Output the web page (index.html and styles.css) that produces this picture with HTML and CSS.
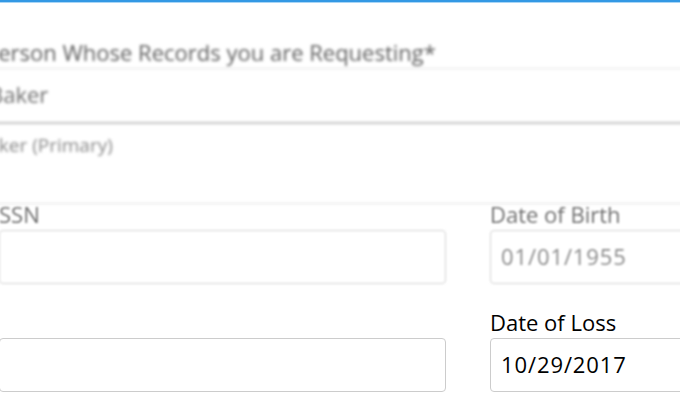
FILE: index.html
```html
<!DOCTYPE html>
<html lang="en">
<head>
    <meta charset="UTF-8">
    <meta name="viewport" content="width=device-width, initial-scale=1.0">
    <title>Records Request</title>
    <link rel="stylesheet" href="styles.css">
</head>
<body>
    <div class="topbar"></div>
    <div class="form">
        <div class="requested far">
            <div class="section-label">Person Whose Records you are Requesting*</div>
            <div class="person-field">Baker</div>
            <div class="person-options">
                <div class="person-option">Baker (Primary)</div>
            </div>
        </div>

        <div class="field-row near">
            <div class="field">
                <label for="ssn">SSN</label>
                <input type="text" id="ssn">
            </div>
            <div class="field">
                <label for="dob">Date of Birth</label>
                <input type="text" id="dob" class="muted" value="01/01/1955">
            </div>
        </div>

        <div class="field-row">
            <div class="field">
                <label for="claim">&nbsp;</label>
                <input type="text" id="claim">
            </div>
            <div class="field">
                <label for="dol">Date of Loss</label>
                <input type="text" id="dol" value="10/29/2017">
            </div>
        </div>
    </div>
</body>
</html>
```

FILE: styles.css
```css
html, body {
    margin: 0;
    overflow: hidden;
    background: #fff;
}
body {
    font-family: "Open Sans", "Liberation Sans", sans-serif;
    font-size: 22px;
    color: #000;
}
.topbar {
    height: 3px;
    background: linear-gradient(#3398e4 0, #3398e4 2px, #a8d5f6 2px);
}
.form {
    width: 980px;
    margin-left: -30px;
}
.far {
    filter: blur(1.4px);
}
.near {
    filter: blur(1px);
}
.section-label {
    margin-top: 34px;
    margin-bottom: 1px;
    padding-left: 15px;
    line-height: 30px;
    color: #5e5e5e;
}
.person-field {
    border-top: 1px solid #e2e2e2;
    border-bottom: 2px solid #c4c4c4;
    padding: 10px 0 13px 19px;
    line-height: 30px;
    color: #6e6e6e;
}
.person-options {
    border-bottom: 1px solid #dedede;
}
.person-option {
    padding: 9px 0 46px 6px;
    font-size: 19px;
    line-height: 24px;
    color: #888;
}
.field-row {
    display: grid;
    grid-template-columns: 447px 448px;
    gap: 44px;
    padding-left: 29px;
    margin-bottom: 28px;
}
.field-row:last-child {
    margin-bottom: 0;
}
.field label {
    display: block;
    line-height: 20px;
    margin-bottom: 6px;
}
.near .field label {
    color: #6e6e6e;
}
.field input {
    display: block;
    box-sizing: border-box;
    width: 100%;
    height: 54px;
    margin: 0;
    padding: 0 10px 3px;
    border: 1px solid #cccccc;
    border-radius: 4px;
    font-family: inherit;
    font-size: 22px;
    letter-spacing: 0.9px;
    color: #000;
    background: #fff;
}
.near .field input {
    border-color: #d4d4d4;
}
.field input.muted {
    color: #8a8a8a;
}
```
